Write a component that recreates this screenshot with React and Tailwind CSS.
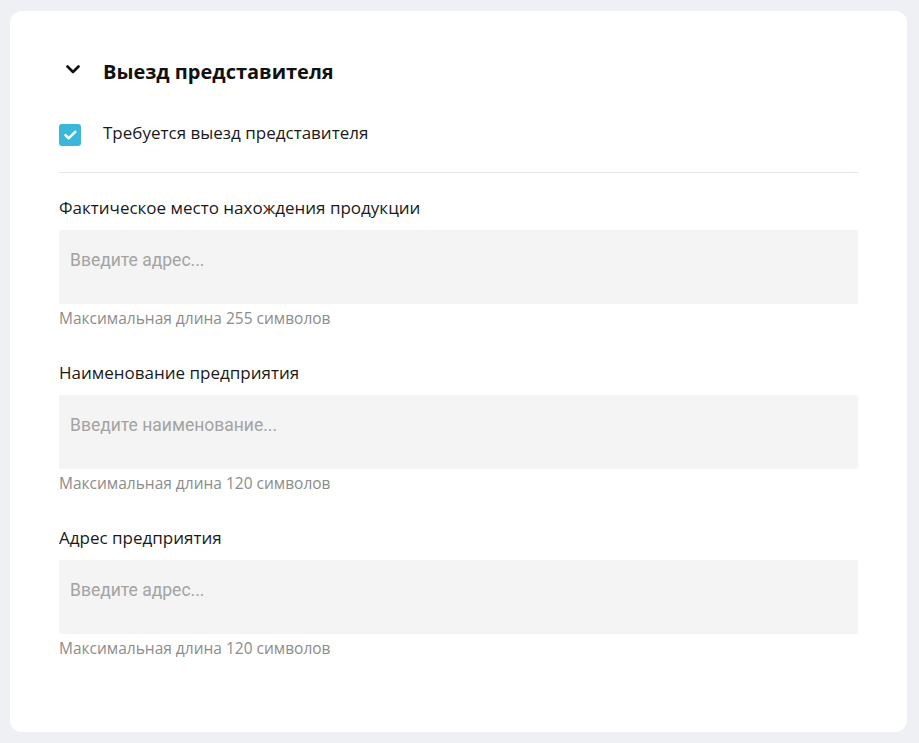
import React from "react";

function Field({ label, placeholder, hint }) {
  return (
    <div className="flex flex-col">
      <div className="text-[17px] leading-[20px] text-[#1a1a1a] h-[20px]">{label}</div>
      <div className="mt-[12px] h-[74px] rounded-[2px] bg-[#f4f4f4] px-[11px] pt-[18px]">
        <span className="font-['Roboto',sans-serif] text-[17.5px] leading-[20px] text-[#a3a3a3]">{placeholder}</span>
      </div>
      <div className="mt-[5px] text-[15.5px] leading-[18px] text-[#8c8c8c]">{hint}</div>
    </div>
  );
}

export default function App() {
  return (
    <div className="min-h-[743px] bg-[#eff0f4] pt-[11px] pl-[10px] pr-[12px] pb-[11px] font-['Open_Sans',sans-serif]">
      <div className="h-[721px] rounded-[12px] bg-white px-[49px] pt-[47px]">
        <div className="flex items-center h-[28px]">
          <svg width="14" height="9" viewBox="0 0 14 9" className="ml-[7px] mt-[-6px]" fill="none">
            <path d="M1.5 1.5 L7 7 L12.5 1.5" stroke="#111" strokeWidth="2.6" strokeLinecap="round" strokeLinejoin="round" />
          </svg>
          <span className="ml-[23px] text-[20px] font-bold text-[#111] leading-[28px]">Выезд представителя</span>
        </div>
        <div className="mt-[38px] flex items-center h-[22px]">
          <div className="w-[22px] h-[22px] rounded-[3px] bg-[#3bb7d9] flex items-center justify-center">
            <svg width="13" height="10" viewBox="0 0 13 10" fill="none">
              <path d="M1.6 5.2 L4.8 8.2 L11.2 1.8" stroke="#fff" strokeWidth="2.6" strokeLinecap="round" strokeLinejoin="round" />
            </svg>
          </div>
          <span className="ml-[22px] mt-[-4px] text-[17px] text-[#1a1a1a]">Требуется выезд представителя</span>
        </div>
        <div className="mt-[26px] h-px bg-[#e6e4ef]" />
        <div className="mt-[25px] flex flex-col gap-[36px]">
          <Field label="Фактическое место нахождения продукции" placeholder="Введите адрес..." hint="Максимальная длина 255 символов" />
          <Field label="Наименование предприятия" placeholder="Введите наименование..." hint="Максимальная длина 120 символов" />
          <Field label="Адрес предприятия" placeholder="Введите адрес..." hint="Максимальная длина 120 символов" />
        </div>
      </div>
    </div>
  );
}
